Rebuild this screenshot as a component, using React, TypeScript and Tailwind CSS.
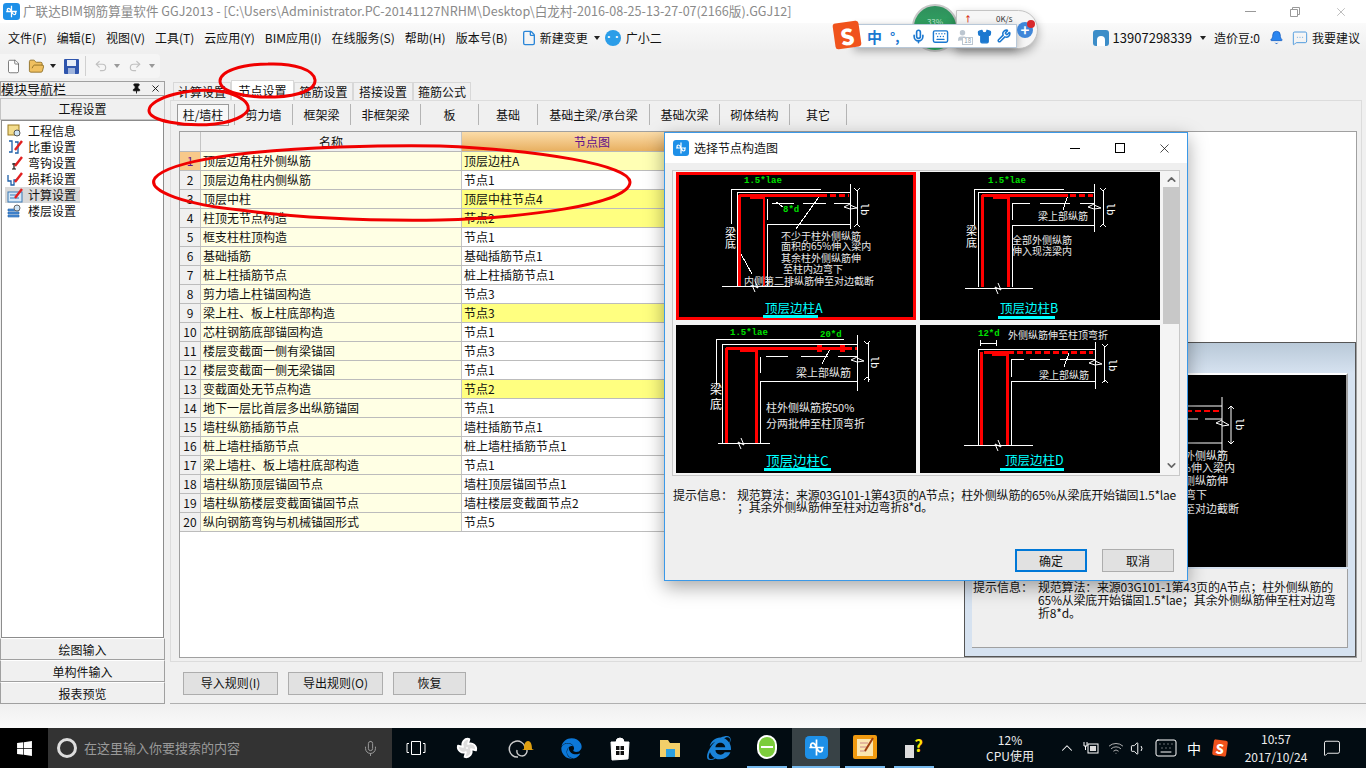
import { Bell, ChevronDown, ChevronUp, Fan, File, FolderOpen, Keyboard, MessageSquare, MessageSquareMore, Mic, Pin, Redo2, Shirt, Undo2, User, Volume1, Wifi, Wrench, X } from 'lucide-react';
import { FaEdge, FaInternetExplorer, FaWindows } from 'react-icons/fa';

type Seg = [number, number, number, number];
type RedSeg = [number, number, number, number, number, boolean?];
type Label = [number, number, string, string?, number?];

type DiagramData = {
  white: Seg[];
  red: RedSeg[];
  labels: Label[];
  lb: [number, number, number];
  brk: [number, number];
  title: [number, number, string, number, number, number, number];
  selected?: boolean;
};

const GREEN = '#00e000';

const diagrams: DiagramData[] = [
  {
    selected: true,
    white: [
      [55, 17, 145, 17], [55, 17, 55, 52], [61, 20, 174, 20], [61, 20, 61, 114], [91, 53, 91, 114], [91, 52, 175, 52],
      [91, 27, 91, 48], [96, 31, 118, 31], [127, 31, 150, 31], [158, 31, 174, 31], [174, 12, 174, 57], [181, 18, 181, 53],
      [46, 114, 114, 114], [145, 22, 120, 57], [65, 82, 76, 102], [100, 30, 107, 35],
    ],
    red: [[63, 23, 145, 23, 3], [145, 23, 173, 23, 3, true], [63.5, 23, 63.5, 114, 3], [88, 25, 88, 114, 2], [74, 25, 89, 25, 3]],
    labels: [
      [68, 9, '1.5*lae', GREEN], [107, 38, '8*d', GREEN], [49, 60, '梁', '#fff', 11], [49, 71, '底', '#fff', 11],
      [105, 63, '不少于柱外侧纵筋'], [105, 73, '面积的65%伸入梁内'], [105, 85, '其余柱外侧纵筋伸'], [107, 96, '至柱内边弯下'], [68, 108, '内侧第二排纵筋伸至对边截断'],
    ],
    lb: [188, 37, 174],
    brk: [79, 114],
    title: [89, 135, '顶层边柱A', 87, 142, 143, 12.5],
  },
  {
    white: [
      [54, 17, 144, 17], [54, 17, 54, 53], [58, 20, 175, 20], [58, 20, 58, 115], [92, 53, 92, 115], [92, 53, 175, 53],
      [92, 31, 92, 48], [92, 31, 110, 31], [120, 31, 150, 31], [160, 31, 174, 31], [174, 12, 174, 60], [183, 18, 183, 53],
      [45, 116, 113, 116], [148, 23, 143, 38],
    ],
    red: [[62, 23, 148, 23, 3], [150, 23, 173, 23, 3, true], [62, 23, 62, 115, 3], [88, 25, 88, 115, 3], [73, 25, 88, 25, 3]],
    labels: [
      [68, 9, '1.5*lae', GREEN], [46, 58, '梁', '#fff', 11], [46, 70, '底', '#fff', 11], [118, 43, '梁上部纵筋'],
      [92, 67, '全部外侧纵筋'], [92, 78, '伸入现浇梁内'],
    ],
    lb: [190, 37, 174],
    brk: [78, 116],
    title: [80, 135, '顶层边柱B', 78, 135, 144, 12.5],
  },
  {
    white: [
      [40, 14, 168, 14], [40, 14, 40, 60], [46, 19, 181, 19], [46, 19, 46, 118], [84, 56, 84, 118], [84, 56, 181, 56],
      [84, 32, 84, 48], [90, 31, 112, 31], [125, 31, 152, 31], [162, 31, 181, 31], [181, 10, 181, 66], [192, 17, 192, 57],
      [42, 118, 94, 118], [154, 24, 146, 39],
    ],
    red: [[50, 23, 170, 23, 3], [170, 23, 181, 23, 3, true], [50, 23, 50, 118, 3], [80, 25, 80, 118, 3], [64, 25, 80, 25, 3], [143, 20, 143, 27, 5], [166, 20, 166, 27, 5]],
    labels: [
      [54, 8, '1.5*lae', GREEN], [144, 10, '20*d', GREEN], [34, 63, '梁', '#fff', 12], [34, 78, '底', '#fff', 12], [120, 47, '梁上部纵筋', '#e8e8e8', 11],
      [90, 82, '柱外侧纵筋按50%', '#e8e8e8', 11], [90, 98, '分两批伸至柱顶弯折', '#e8e8e8', 11],
    ],
    lb: [198, 37, 181],
    brk: [65, 118],
    title: [90, 135, '顶层边柱C', 88, 155, 143, 13.5],
  },
  {
    white: [
      [60, 18, 76, 18], [60, 15, 60, 21], [76, 15, 76, 21], [58, 24, 175, 24], [58, 24, 58, 120], [91, 57, 91, 120], [91, 56, 175, 56],
      [91, 35, 91, 52], [91, 34, 104, 34], [110, 34, 130, 34], [140, 34, 175, 34], [175, 17, 175, 64], [184, 22, 184, 57],
      [44, 120, 113, 120], [149, 28, 144, 42],
    ],
    red: [[64, 27, 88, 27, 3], [88, 27, 173, 27, 3, true], [61, 27, 61, 120, 3], [87, 29, 87, 120, 3], [72, 29, 87, 29, 3]],
    labels: [
      [58, 9, '12*d', GREEN], [88, 9, '外侧纵筋伸至柱顶弯折'], [119, 49, '梁上部纵筋'],
    ],
    lb: [192, 40, 175],
    brk: [78, 120],
    title: [85, 134, '顶层边柱D', 80, 144, 143, 12.5],
  },
];

const rows: [string, string, string?][] = [
  ['顶层边角柱外侧纵筋', '顶层边柱A', 'bg-[#ffffb4]'],
  ['顶层边角柱内侧纵筋', '节点1'],
  ['顶层中柱', '顶层中柱节点4', 'bg-[#ffff80]'],
  ['柱顶无节点构造', '节点2', 'bg-[#ffff80]'],
  ['框支柱柱顶构造', '节点1'],
  ['基础插筋', '基础插筋节点1'],
  ['桩上柱插筋节点', '桩上柱插筋节点1'],
  ['剪力墙上柱锚固构造', '节点3'],
  ['梁上柱、板上柱底部构造', '节点3', 'bg-[#ffff80]'],
  ['芯柱钢筋底部锚固构造', '节点1'],
  ['楼层变截面一侧有梁锚固', '节点3'],
  ['楼层变截面一侧无梁锚固', '节点1'],
  ['变截面处无节点构造', '节点2', 'bg-[#ffff80]'],
  ['地下一层比首层多出纵筋锚固', '节点1'],
  ['墙柱纵筋插筋节点', '墙柱插筋节点1'],
  ['桩上墙柱插筋节点', '桩上墙柱插筋节点1'],
  ['梁上墙柱、板上墙柱底部构造', '节点1'],
  ['墙柱纵筋顶层锚固节点', '墙柱顶层锚固节点1'],
  ['墙柱纵筋楼层变截面锚固节点', '墙柱楼层变截面节点2'],
  ['纵向钢筋弯钩与机械锚固形式', '节点5'],
];

const subTabs = [
  ['剪力墙', 'w-[58px]'],
  ['框架梁', 'w-[58px]'],
  ['非框架梁', 'w-[70px]'],
  ['板', 'w-[58px]'],
  ['基础', 'w-[59px]'],
  ['基础主梁/承台梁', 'w-[112px]'],
  ['基础次梁', 'w-[70px]'],
  ['砌体结构', 'w-[70px]'],
  ['其它', 'w-[58px]'],
];

const topTabs = [
  ['计算设置', 'w-[58px]'],
  ['节点设置', 'w-[63px]'],
  ['箍筋设置', 'w-[59px]'],
  ['搭接设置', 'w-[60px]'],
  ['箍筋公式', 'w-[58px]'],
];

const menus = ['文件(F)', '编辑(E)', '视图(V)', '工具(T)', '云应用(Y)', 'BIM应用(I)', '在线服务(S)', '帮助(H)', '版本号(B)'];

// full-width colon and semicolon, as in the original hints
const HINT_LABEL = '提示信息\uFF1A';
const HINT_A = '规范算法\uFF1A来源03G101-1第43页的A节点\uFF1B柱外侧纵筋的';

function GldIcon({ size = 16 }: { size?: number }) {
  return (
    <svg width={size} height={size} viewBox="0 0 16 16">
      <rect width="16" height="16" rx="3" fill="#1e90e8" />
      <path d="M8 2.5v11M3 8h10M5.5 8c-2-.2-2-3 0-3 1.2 0 1.6 1 2.5 3M10.5 8c2 .2 2 3 0 3-1.2 0-1.6-1-2.5-3" fill="none" stroke="#fff" strokeWidth="1.2" />
    </svg>
  );
}

function Caret({ color = '#222' }: { color?: string }) {
  return <span className="w-0 h-0 border-x-[3px] border-x-transparent border-t-[4px]" style={{ borderTopColor: color }} />;
}

function NavIcon({ kind }: { kind: number }) {
  const base = [
    <g key="0"><rect x="1" y="2" width="11" height="10" fill="#f3dc8c" stroke="#9a7a20" /><circle cx="10" cy="10" r="3" fill="#cfe4f5" stroke="#555" /></g>,
    <path key="1" d="M2 2h3v11H2M8 3h3v11H8" fill="none" stroke="#1d5fa8" strokeWidth="1.3" />,
    <path key="2" d="M7 8v6M5 14h4M5 9h4" fill="none" stroke="#111" strokeWidth="1.2" />,
    <path key="3" d="M1 4v6h3v4h3v-5h3" fill="none" stroke="#1d5fa8" strokeWidth="1.3" />,
    <g key="4"><rect x="1" y="5" width="14" height="10" fill="#d5e8f8" stroke="#3b7ab5" /><path d="M3 8h7M3 11h9" stroke="#3b7ab5" /></g>,
    <g key="5"><path d="M1 6h11v2H1zM1 9h11v2H1zM1 12h11v2H1z" fill="#4d8fd8" stroke="#1d5fa8" strokeWidth=".6" /><circle cx="10" cy="5" r="3" fill="#cfe4f5" stroke="#666" /></g>,
  ];
  return (
    <svg width="17" height="16" viewBox="0 0 17 16" className="shrink-0 ml-[2px]">
      {base[kind]}
      {kind > 0 && kind < 5 && <path d="M8 11l7-9" stroke="#e02020" strokeWidth="2.4" />}
    </svg>
  );
}

function Diagram({ d }: { d: DiagramData }) {
  const [lbX, lbY, colX] = d.lb;
  return (
    <svg width="240" height="148" viewBox="0 0 240 148" className="bg-black block">
      {d.selected && <rect x="1.5" y="1.5" width="237" height="145" fill="none" stroke="#ff0000" strokeWidth="3" />}
      {d.white.map((s, i) => (
        <line key={i} x1={s[0]} y1={s[1]} x2={s[2]} y2={s[3]} stroke="#fff" strokeWidth="1" shapeRendering="crispEdges" />
      ))}
      {d.red.map((s, i) => (
        <line key={i} x1={s[0]} y1={s[1]} x2={s[2]} y2={s[3]} stroke="#ff0000" strokeWidth={s[4]} strokeDasharray={s[5] ? '6 3' : undefined} shapeRendering="crispEdges" />
      ))}
      <path d={`M${d.brk[0]} ${d.brk[1] + 6}l-3 -7 6 3 -3 -7`} fill="none" stroke="#fff" />
      <path d={`M${colX} ${lbY - 5}l-6 3 6 2M${colX} ${lbY}l7 -1 -7 -3`} fill="none" stroke="#fff" />
      <path d={`M${lbX - 10} ${lbY - 21}l3 3 3-3M${lbX - 10} ${lbY + 18}l3-3 3 3`} fill="none" stroke="#fff" />
      <text x={lbX} y={lbY} fill="#fff" fontSize="11" textAnchor="middle" dominantBaseline="central" className="font-['Liberation_Mono']" transform={`rotate(90 ${lbX} ${lbY})`}>lb</text>
      {d.labels.map((l, i) => (
        <text key={i} x={l[0]} y={l[1]} fill={l[3] ?? '#e8e8e8'} fontSize={l[3] === GREEN ? 9 : (l[4] ?? 10)} dominantBaseline="central" className={l[3] === GREEN ? "font-['Liberation_Mono'] font-bold" : undefined}>{l[2]}</text>
      ))}
      <text x={d.title[0]} y={d.title[1]} fill="#00ffff" fontSize={d.title[6]} dominantBaseline="central">{d.title[2]}</text>
      <rect x={d.title[3]} y={d.title[5]} width={d.title[4] - d.title[3]} height="3" fill="#00ffff" />
    </svg>
  );
}

function GrayButton({ label, className }: { label: string; className: string }) {
  return (
    <button type="button" className={`h-[23px] bg-[#e1e1e1] border border-[#adadad] text-xs text-[#111] ${className}`}>
      {label}
    </button>
  );
}

function NavTab({ label }: { label: string }) {
  return <div className="h-[22px] pt-[2px] flex items-center justify-center text-xs bg-[#f0f0f0] border border-[#a0a0a0] border-t-white text-[#111]">{label}</div>;
}

function ImeBar() {
  return (
    <div className="absolute left-[832px] top-[3px] w-[208px] h-[52px]">
      <div className="absolute left-[80px] top-[1px] w-[46px] h-[48px] rounded-full bg-gradient-to-b from-[#2f8f5c] to-[#2fb866] border-2 border-[#c8c8c8] flex items-start justify-center pt-[10px] text-[8px] text-[#bfe8cf]">
        33%
      </div>
      <div className="absolute left-[124px] top-[7px] w-[82px] h-[39px] rounded-r-[20px] bg-[#f6f6f6] border border-[#c4c4c4] shadow-[0_4px_10px_rgba(0,0,0,0.3)] flex items-start pt-[2px] text-[8px] leading-[12px] text-[#333]">
        <span className="ml-[7px] text-[#d83020] font-bold">↑</span>
        <span className="ml-[24px]">0K/s</span>
      </div>
      <div className="absolute left-[22px] top-[21px] w-[163px] h-[24px] bg-white border border-[#b8c8d8] flex items-center pl-[12px] text-[#1b78d0] shadow-[0_3px_8px_rgba(0,0,0,0.3)]">
        <span className="text-[15px] font-bold leading-none">中</span>
        <span className="ml-[8px] text-[13px] font-bold leading-none w-[14px]">°,</span>
        <Mic size={15} strokeWidth={2.6} className="ml-[7px]" />
        <Keyboard size={17} strokeWidth={2} className="ml-[6px]" />
        <span className="relative ml-[7px] w-[15px] h-[15px] text-[#bcc6d0]">
          <User size={13} fill="#bcc6d0" />
          <span className="absolute right-[-2px] bottom-[-1px] px-px bg-white border border-[#bcc6d0] text-[6px] leading-[6px] text-[#8a98a6]">18</span>
        </span>
        <Shirt size={15} fill="#1b78d0" className="ml-[6px]" />
        <Wrench size={14} strokeWidth={2.6} className="ml-[5px]" />
      </div>
      <div className="absolute left-[2px] top-[19px] w-[26px] h-[26px] bg-[#f0531c] rotate-[-8deg] rounded-[3px] flex items-center justify-center text-white text-[22px] font-black leading-none">
        S
      </div>
      <div className="absolute left-[185px] top-[19px] w-[16px] h-[16px] rounded-full bg-[#3f86d8] text-white text-[15px] leading-[15px] text-center font-bold">+</div>
      <div className="absolute left-[195px] top-[17px] w-[8px] h-[8px] rounded-full bg-[#d8282c]" />
    </div>
  );
}

function ChooseDialog() {
  return (
    <div className="absolute left-[664px] top-[132px] w-[524px] h-[449px] bg-[#efefef] border border-[#3b99e8] shadow-[0_6px_18px_rgba(0,0,0,0.35)] flex flex-col">
      <div className="h-[30px] bg-white flex items-center pl-[8px] pr-[15px] text-[#111]">
        <GldIcon />
        <span className="ml-[5px] text-xs">选择节点构造图</span>
        <span className="ml-auto w-[10px] h-px bg-black" />
        <span className="ml-[35px] w-[10px] h-[10px] border border-black" />
        <X size={15} strokeWidth={1.2} className="ml-[32px]" />
      </div>
      <div className="mx-[7px] mt-[7px] h-[306px] border border-[#c8c8c8] bg-[#f4f4f4] pl-[3px] pt-[1px] flex">
        <div className="grid grid-cols-[240px_240px] gap-x-[4px] gap-y-[5px] content-start">
          {diagrams.map((d) => (
            <Diagram key={d.title[2]} d={d} />
          ))}
        </div>
        <div className="ml-[3px] w-[16px] flex flex-col items-center text-[#666]">
          <ChevronUp size={13} strokeWidth={3} className="my-[1px]" />
          <div className="w-full h-[137px] bg-[#c8c8c8]" />
          <ChevronDown size={13} strokeWidth={3} className="mt-auto mb-[3px]" />
        </div>
      </div>
      <div className="mt-[13px] pl-[8px] flex text-xs text-[#111] leading-[12px]">
        <span className="w-[64px] shrink-0">{HINT_LABEL}</span>
        <p className="whitespace-nowrap tracking-[-0.2px]">
          {HINT_A}65%从梁底开始锚固1.5*lae
          <br />
          {'\uFF1B其余外侧纵筋伸至柱对边弯折8*d。'}
        </p>
      </div>
      <div className="mt-auto mb-[8px] pr-[13px] flex justify-end gap-[15px]">
        <button type="button" className="w-[72px] h-[23px] bg-[#e1e1e1] border-2 border-[#0078d7] text-xs text-[#111]">确定</button>
        <button type="button" className="w-[72px] h-[23px] bg-[#e1e1e1] border border-[#adadad] text-xs text-[#111]">取消</button>
      </div>
    </div>
  );
}

function PreviewPanel() {
  return (
    <div className="flex-1 border border-[#555] bg-[#d6e2f0] flex flex-col">
      <div className="h-[30px] bg-gradient-to-b from-[#b9c9d8] to-[#d6e2f0]" />
      <div className="ml-[7px] mr-[7px] h-[194px] bg-black border-t-2 border-white border-r-2 border-r-[#a0a0a0] flex justify-end">
        <svg width="160" height="192" viewBox="1188 376 160 192" className="shrink-0">
          <line x1="1188" y1="407" x2="1224" y2="407" stroke="#fff" />
          <line x1="1188" y1="412" x2="1224" y2="412" stroke="#ff0000" strokeWidth="2" strokeDasharray="6 3" />
          <line x1="1188" y1="420" x2="1200" y2="420" stroke="#fff" />
          <line x1="1207" y1="420" x2="1224" y2="420" stroke="#fff" />
          <line x1="1188" y1="444" x2="1224" y2="444" stroke="#fff" />
          <line x1="1224" y1="398" x2="1224" y2="455" stroke="#fff" />
          <line x1="1233" y1="407" x2="1233" y2="445" stroke="#fff" />
          <path d="M1224 421l-6 3 6 2M1224 427l7-1-7-4M1230 410l3-3 3 3M1230 442l3 3 3-3" fill="none" stroke="#fff" />
          <text x="1241" y="425" fill="#fff" fontSize="11" textAnchor="middle" dominantBaseline="central" className="font-['Liberation_Mono']" transform="rotate(90 1241 425)">lb</text>
          <text x="1230" y="456" fill="#e8e8e8" fontSize="11" textAnchor="end" dominantBaseline="central">外侧纵筋</text>
          <text x="1237" y="468" fill="#e8e8e8" fontSize="11" textAnchor="end" dominantBaseline="central">%伸入梁内</text>
          <text x="1230" y="481" fill="#e8e8e8" fontSize="11" textAnchor="end" dominantBaseline="central">侧纵筋伸</text>
          <text x="1209" y="495" fill="#e8e8e8" fontSize="11" textAnchor="end" dominantBaseline="central">弯下</text>
          <text x="1241" y="509" fill="#e8e8e8" fontSize="11" textAnchor="end" dominantBaseline="central">至对边截断</text>
        </svg>
      </div>
      <div className="mx-[7px] mt-[2px] h-[79px] bg-[#efefef] border-b border-r border-[#a0a0a0] pl-[1px] pt-[11px] flex text-xs text-[#111] leading-[13px]">
        <span className="w-[65px] shrink-0">{HINT_LABEL}</span>
        <p className="whitespace-nowrap tracking-[-0.2px]">
          {HINT_A}
          <br />
          {'65%从梁底开始锚固1.5*lae\uFF1B其余外侧纵筋伸至柱对边弯'}
          <br />
          折8*d。
        </p>
      </div>
      <div className="h-[8px]" />
    </div>
  );
}

function Taskbar() {
  return (
    <footer className="h-[40px] bg-[#020c12] flex items-center text-white">
      <div className="w-[48px] h-full bg-black flex items-center justify-center">
        <FaWindows size={17} />
      </div>
      <div className="w-[344px] h-full bg-[#333] flex items-center pl-[9px] text-[#9a9a9a] text-[13px]">
        <span className="w-[20px] h-[20px] rounded-full border-[3px] border-[#ddd]" />
        <span className="ml-[7px]">在这里输入你要搜索的内容</span>
        <Mic size={17} strokeWidth={1.4} className="ml-auto mr-[13px]" />
      </div>
      <svg width="20" height="16" viewBox="0 0 20 16" className="ml-[14px]">
        <path d="M5.500 1.500h9v13h-9zM3 3.500H1v9h2M17 3.500h2v9h-2" fill="none" stroke="#fff" />
      </svg>
      <Fan size={22} fill="#ddd" className="ml-[30px]" />
      <svg width="28" height="24" viewBox="0 0 28 24" className="ml-[28px]">
        <path d="M12 21a8 8 0 1 1 7-10 5 5 0 1 1-8 3" fill="none" stroke="#ccc" strokeWidth="1.4" />
        <path d="M18 13c0-4 1-8 4-8s4 4 4 8l2 1H16z" fill="#e0a010" />
      </svg>
      <FaEdge size={21} color="#0c78d8" className="ml-[27px]" />
      <svg width="22" height="26" viewBox="0 0 22 26" className="ml-[27px]">
        <path d="M7 7a4 4 0 0 1 8 0M2 7h18l-1 17-16 1z" fill="#fff" stroke="#fff" />
        <path d="M7 11h3.500v4H7zM11.500 11H15v4h-3.500zM7 16h3.500v4H7zM11.500 16H15v4h-3.500z" fill="#111" />
      </svg>
      <svg width="24" height="20" viewBox="0 0 22 20" className="ml-[27px]">
        <path d="M1 2h8l2 3h10v14H1z" fill="#f2cf6a" />
        <rect x="7" y="11" width="9" height="8" fill="#2a9fe0" />
      </svg>
      <FaInternetExplorer size={24} color="#1a83d8" className="ml-[25px]" />
      <div className="ml-[16px] w-[40px] h-full flex items-center justify-center border-b-2 border-[#76b9ed]">
        <span className="w-[20px] h-[24px] rounded-full bg-[#7ccc3c] border-2 border-white flex items-center justify-center">
          <span className="w-[12px] h-[2px] bg-white" />
        </span>
      </div>
      <div className="ml-[5px] w-[48px] h-full bg-[#384246] flex items-center justify-center border-b-2 border-[#76b9ed]">
        <GldIcon size={23} />
      </div>
      <div className="ml-[5px] w-[40px] h-full flex items-center justify-center border-b-2 border-[#76b9ed]">
        <svg width="24" height="24" viewBox="0 0 24 24">
          <rect width="24" height="24" rx="2" fill="#f09a10" />
          <rect x="4" y="4" width="16" height="17" fill="#fbe6b0" />
          <path d="M7 8h8M7 12h8M7 16h6" stroke="#c88" />
          <path d="M12 16l8-13" stroke="#a04010" strokeWidth="2" />
        </svg>
      </div>
      <div className="ml-[9px] w-[40px] h-full flex items-center justify-center border-b-2 border-[#76b9ed] text-[#ffe400] font-bold text-[17px] leading-none">
        <span className="mt-[8px] w-[9px] h-[13px] bg-[#ddd]" />
        <span className="mb-[6px]">?</span>
      </div>
      <div className="ml-[46px] w-[60px] flex flex-col items-center text-xs leading-[16px] text-[#eee]">
        <span>12%</span>
        <span>CPU使用</span>
      </div>
      <ChevronUp size={18} strokeWidth={1.4} className="ml-[18px]" />
      <svg width="16" height="14" viewBox="0 0 16 14" className="ml-[7px]">
        <rect x="5" y="3" width="10" height="9" fill="none" stroke="#fff" />
        <rect x="7" y="5" width="6" height="5" fill="#ddd" />
        <path d="M1 1v4h3V1M2.500 5v4" stroke="#fff" fill="none" />
      </svg>
      <Wifi size={16} strokeWidth={1.4} className="ml-[9px] text-[#bbb]" />
      <Volume1 size={17} strokeWidth={1.4} className="ml-[6px]" />
      <Keyboard size={24} strokeWidth={1} className="ml-[7px]" />
      <span className="ml-[9px] text-sm leading-none">中</span>
      <span className="ml-[12px] w-[14px] h-[16px] bg-[#f0531c] rotate-[8deg] rounded-[2px] flex items-center justify-center text-[13px] font-black leading-none">S</span>
      <div className="ml-[14px] w-[70px] flex flex-col items-center text-xs leading-[18px] text-[#eee]">
        <span>10:57</span>
        <span>2017/10/24</span>
      </div>
      <MessageSquare size={18} strokeWidth={1.2} className="ml-[12px]" />
    </footer>
  );
}

export default function App() {
  return (
    <div className="relative w-[1366px] h-[768px] overflow-hidden flex flex-col bg-[#f0f0f0] font-['Noto_Sans_CJK_SC','Liberation_Sans',sans-serif]">
      <header className="h-[23px] bg-white flex items-center pl-[3px] text-[12.6px] text-[#8a8a8a]">
        <GldIcon size={17} />
        <span className="ml-[3px] whitespace-nowrap">
          广联达BIM钢筋算量软件 GGJ2013 - [C:\Users\Administrator.PC-20141127NRHM\Desktop\白龙村-2016-08-25-13-27-07(2166版).GGJ12]
        </span>
        <span className="ml-auto w-[11px] h-px bg-[#999]" />
        <svg width="10" height="10" viewBox="0 0 10 10" className="ml-[34px]">
          <path d="M.5 2.500h7v7h-7zM2.500 2.500v-2h7v7h-2" fill="none" stroke="#999" />
        </svg>
        <X size={14} strokeWidth={1.1} className="ml-[34px] mr-[18px] text-[#999]" />
      </header>

      <nav className="h-[29px] bg-gradient-to-b from-[#fafafa] to-[#efefef] flex items-center pl-[8px] pr-[6px] text-xs text-[#111] whitespace-nowrap">
        <div className="flex gap-[10px]">
          {menus.map((m) => (
            <span key={m}>{m}</span>
          ))}
        </div>
        <File size={16} className="ml-[13px] text-[#2b86d8]" />
        <span className="ml-[3px]">新建变更</span>
        <span className="ml-[6px] flex"><Caret /></span>
        <span className="ml-[5px] w-[16px] h-[16px] rounded-full bg-[#2b9de8] text-white text-[8px] leading-[14px] text-center font-bold">••</span>
        <span className="ml-[5px]">广小二</span>
        <span className="ml-auto w-[16px] h-[16px] rounded-[3px] bg-[#3c8dc8] flex items-end justify-center">
          <span className="w-[8px] h-[10px] rounded-t-full bg-white" />
        </span>
        <span className="ml-[4px] text-[13px]">13907298339</span>
        <span className="ml-[8px] flex"><Caret /></span>
        <span className="ml-[8px]">造价豆:0</span>
        <Bell size={15} fill="#2b86f0" strokeWidth={1.2} className="ml-[9px] text-[#1a5fc0]" />
        <MessageSquareMore size={16} strokeWidth={1.2} className="ml-[8px] text-[#2b86d8]" />
        <span className="ml-[4px]">我要建议</span>
      </nav>

      <div className="h-[28px] bg-[#efefef] flex items-center">
        <div className="w-[160px] h-[24px] rounded-r bg-[#f5f5f5] flex items-center pl-[6px]">
          <File size={15} strokeWidth={1.2} fill="#fff" className="text-[#555]" />
          <FolderOpen size={17} strokeWidth={1.2} fill="#f0c060" className="ml-[7px] text-[#8a6a20]" />
          <span className="ml-[5px] flex"><Caret /></span>
          <svg width="15" height="15" viewBox="0 0 15 15" className="ml-[8px]">
            <rect width="15" height="15" rx="1" fill="#2f55ad" />
            <rect x="3" y="1" width="9" height="6" fill="#e8eef8" />
            <rect x="4" y="9" width="7" height="6" fill="#9fb4dc" />
          </svg>
          <span className="ml-[6px] w-px h-[20px] bg-[#d0d0d0]" />
          <Undo2 size={14} className="ml-[8px] text-[#c0c0c0]" />
          <span className="ml-[6px] flex"><Caret color="#999" /></span>
          <Redo2 size={14} className="ml-[8px] text-[#c0c0c0]" />
          <span className="ml-[7px] flex"><Caret color="#999" /></span>
        </div>
      </div>

      <main className="h-[625px] flex">
        <aside className="w-[165px] pt-[1px] flex flex-col">
          <div className="h-[15px] mb-[2px] border border-[#a0a0a0] flex items-center text-[13px] text-[#111] leading-none">
            <span>模块导航栏</span>
            <Pin size={11} className="ml-auto mr-[8px]" fill="#111" />
            <X size={11} className="mr-[3px]" />
          </div>
          <div className="h-[22px] border border-[#c4c4c4] flex items-center justify-center text-xs text-[#111]">工程设置</div>
          <ul className="h-[518px] mx-[1px] bg-white border border-[#8c8c8c] pt-[2px] pl-[3px] text-xs text-[#111]">
            {['工程信息', '比重设置', '弯钩设置', '损耗设置', '计算设置', '楼层设置'].map((n, i) => (
              <li key={n} className={`h-[16px] w-[75px] flex items-center gap-[4px] ${i === 4 ? 'bg-[#d9d9d9]' : ''}`}>
                <NavIcon kind={i} />
                <span>{n}</span>
              </li>
            ))}
          </ul>
          <NavTab label="绘图输入" />
          <NavTab label="单构件输入" />
          <NavTab label="报表预览" />
        </aside>

        <section className="w-[1201px] pl-[5px] flex flex-col">
          <div className="h-[20px] pl-[3px] flex items-end text-xs text-[#111]">
            {topTabs.map(([t, w], i) => (
              <span key={t} className={`${w} flex items-center justify-center border border-[#d8d8d8] border-b-0 ${i === 1 ? 'h-[20px] bg-white' : 'h-[18px] bg-[#f0f0f0]'}`}>
                {t}
              </span>
            ))}
          </div>
          <div className="w-[1192px] h-[562px] border border-[#dcdcdc] flex flex-col pl-[8px] pr-[4px]">
            <div className="h-[30px] pt-[3px] -ml-[2px] flex items-start text-xs text-[#111]">
              <span className="w-[57px] h-[22px] flex items-center">
                <span className="w-[52px] h-[22px] bg-[#f8f8f8] border border-[#9a9a9a] flex items-center justify-center">柱/墙柱</span>
              </span>
              {subTabs.map(([t, w]) => (
                <span key={t} className={`${w} h-[21px] flex items-center justify-center border-l border-[#b4b4b4] last:border-r`}>
                  {t}
                </span>
              ))}
            </div>
            <div className="h-[527px] bg-white border border-[#a0a0a0] flex">
              <div className="w-[784px] text-xs text-[#111] leading-none">
                <div className="h-[20px] flex border-b border-[#b8b8b8]">
                  <span className="w-[21px] bg-[#f0f0f0] border-r border-[#c4c4c4]" />
                  <span className="w-[261px] bg-[#f0f0f0] border-r border-[#c4c4c4] flex items-center justify-center">名称</span>
                  <span className="w-[260px] bg-gradient-to-b from-[#fbdca8] to-[#e8b060] flex items-center justify-center text-[#60108a]">节点图</span>
                </div>
                {rows.map(([name, node, bg], i) => (
                  <div key={name} className="h-[19px] flex border-b border-[#bcbcbc]">
                    <span className={`w-[21px] flex items-center justify-center border-r border-[#c4c4c4] ${i === 0 ? 'bg-[#f8c98a] text-[#60108a]' : 'bg-[#f0f0f0]'}`}>{i + 1}</span>
                    <span className="w-[261px] pl-[2px] bg-[#ffffe4] border-r border-[#c4c4c4] flex items-center">{name}</span>
                    <span className={`w-[260px] pl-[2px] flex items-center ${bg ?? 'bg-white'}`}>{node}</span>
                  </div>
                ))}
              </div>
              <div className="flex-1 flex flex-col">
                <div className="h-[211px] bg-white" />
                <PreviewPanel />
              </div>
            </div>
          </div>
          <div className="h-[43px] pt-[2px] border-b border-[#b0b0b0] flex items-center pl-[13px] -mt-px">
            <GrayButton label="导入规则(I)" className="w-[95px]" />
            <GrayButton label="导出规则(O)" className="w-[95px] ml-[10px]" />
            <GrayButton label="恢复" className="w-[73px] ml-[10px]" />
          </div>
        </section>
      </main>

      <div className="h-[23px] bg-gradient-to-b from-[#f0f0f0] to-[#fafafa]" />
      <Taskbar />

      <ChooseDialog />
      <ImeBar />

      <svg width="1366" height="768" className="absolute left-0 top-0 pointer-events-none" fill="none" stroke="#f00000" strokeWidth="3">
        <path d="M268 64C240 64 220 72 220 81C220 92 245 98 275 97C300 96 316 89 315 80C314 70 295 63 268 64Z" />
        <path d="M225 92C190 86 150 98 149 110C148 121 185 127 215 124C240 121 250 112 248 106C246 100 236 95 225 92Z" />
        <path d="M340 147C250 150 170 160 155 178C145 192 190 205 240 210C300 218 370 221 440 220C520 218 630 205 630 182C630 165 540 150 440 146C400 145 370 146 340 147Z" />
      </svg>
    </div>
  );
}
